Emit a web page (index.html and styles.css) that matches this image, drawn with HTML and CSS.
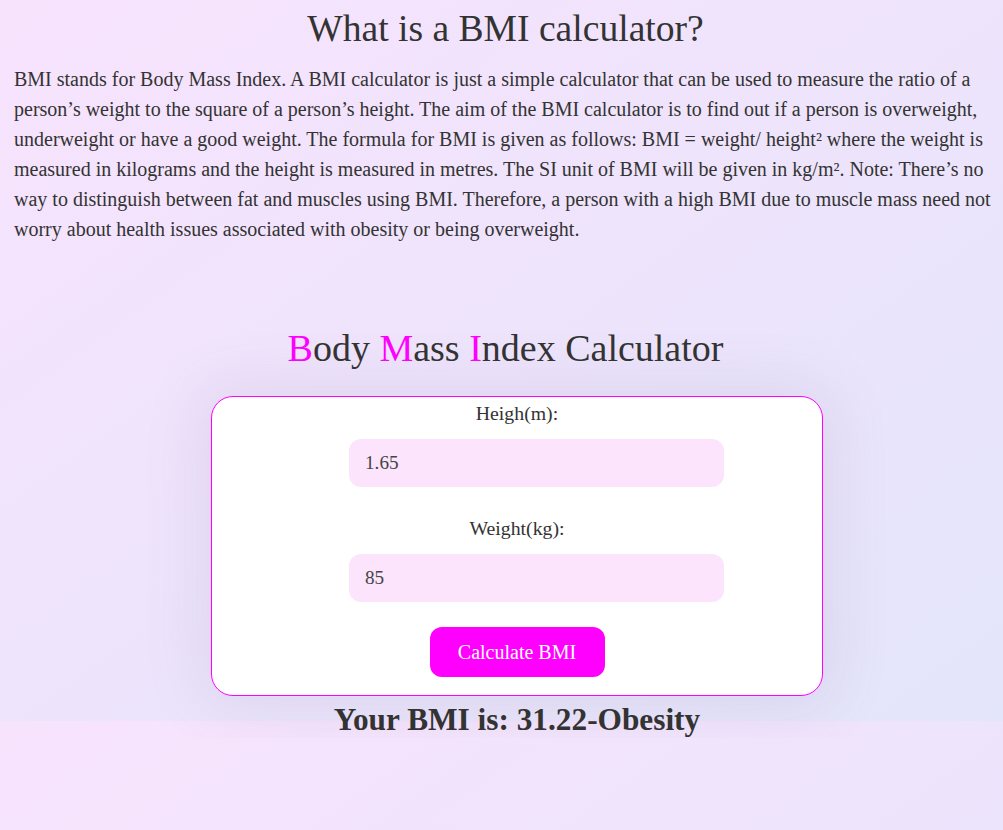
FILE: index.html
```html
<!DOCTYPE html>
<html lang="en">
<head>
<meta charset="utf-8">
<title>BMI Calculator</title>
<link rel="stylesheet" href="styles.css">
</head>
<body class="page">
  <section class="intro">
    <h1 class="intro-title">What is a BMI calculator?</h1>
    <p class="intro-text">BMI stands for Body Mass Index. A BMI calculator is just a simple calculator that can be used to measure the ratio of a person’s weight to the square of a person’s height. The aim of the BMI calculator is to find out if a person is overweight, underweight or have a good weight. The formula for BMI is given as follows: BMI = weight/ height² where the weight is measured in kilograms and the height is measured in metres. The SI unit of BMI will be given in kg/m². Note: There’s no way to distinguish between fat and muscles using BMI. Therefore, a person with a high BMI due to muscle mass need not worry about health issues associated with obesity or being overweight.</p>
  </section>

  <section class="calculator">
    <h1 class="calc-title"><span class="accent">B</span>ody <span class="accent">M</span>ass <span class="accent">I</span>ndex Calculator</h1>
    <form class="calc-card">
      <label class="calc-label" for="height">Heigh(m):</label>
      <input class="calc-input" id="height" type="text" value="1.65">
      <label class="calc-label calc-label-second" for="weight">Weight(kg):</label>
      <input class="calc-input" id="weight" type="text" value="85">
      <button class="calc-button" type="button">Calculate BMI</button>
    </form>
    <h2 class="calc-result">Your BMI is: 31.22-Obesity</h2>
  </section>
</body>
</html>
```

FILE: styles.css
```css
.page {
  margin: 0;
  padding-left: 8px;
  font-family: "Liberation Serif", "Times New Roman", serif;
  color: #333;
  background: linear-gradient(to bottom right, #f8e3fd, #e3e5fb);
  background-size: 100% 721px;
  background-repeat: repeat-y;
}

.intro {
  padding: 0 6px;
}

.intro-title {
  margin: 8px 0 14px;
  font-size: 37.6px;
  font-weight: normal;
  text-align: center;
  line-height: 42px;
}

.intro-text {
  margin: 0;
  font-size: 20px;
  line-height: 30px;
}

.calculator {
  display: flex;
  flex-direction: column;
  align-items: center;
}

.calc-title {
  margin: 83px 0 27px;
  font-size: 38px;
  font-weight: normal;
  line-height: 42px;
}

.accent {
  color: #ff00ff;
}

.calc-card {
  box-sizing: border-box;
  width: 612px;
  margin-left: 23px;
  padding: 5px 0 18px;
  display: flex;
  flex-direction: column;
  align-items: center;
  background: #fff;
  border: 1px solid #ff00ff;
  border-radius: 22px;
  box-shadow: 0 0 60px 10px rgba(120, 110, 140, 0.12);
}

.calc-label {
  font-size: 19.8px;
  line-height: 22px;
}

.calc-label-second {
  margin-top: 30px;
}

.calc-input {
  box-sizing: border-box;
  width: 375px;
  height: 48px;
  margin: 15px 0 0 39px;
  padding: 0 16px;
  border: none;
  border-radius: 12px;
  background: #fce4fc;
  font-family: inherit;
  font-size: 19.2px;
  color: #444;
  outline: none;
}

.calc-button {
  width: 175px;
  height: 50px;
  margin-top: 25px;
  border: none;
  border-radius: 12px;
  background: #ff00ff;
  color: #fff;
  font-family: inherit;
  font-size: 20px;
  cursor: pointer;
}

.calc-result {
  margin: 6px 0 0 23px;
  font-size: 31.3px;
  font-weight: bold;
  line-height: 36px;
}
```
